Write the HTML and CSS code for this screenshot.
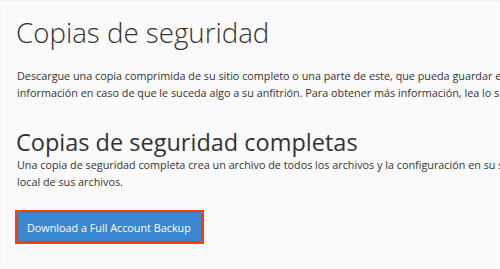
FILE: index.html
```html
<!DOCTYPE html>
<html lang="es">
<head>
<meta charset="utf-8">
<title>Copias de seguridad</title>
<link rel="stylesheet" href="styles.css">
</head>
<body>
<main class="page">
  <h1 class="title">Copias de seguridad</h1>
  <p class="desc">Descargue una copia comprimida de su sitio completo o una parte de este, que pueda guardar en su computadora. Cuando realiza copias de seguridad de su sitio web, tiene una copia adicional de su<br>información en caso de que le suceda algo a su anfitrión. Para obtener más información, lea lo siguiente documentation.</p>
  <h2 class="subtitle">Copias de seguridad completas</h2>
  <p class="desc">Una copia de seguridad completa crea un archivo de todos los archivos y la configuración en su sitio web. Puede utilizar este archivo para mover su cuenta a otro servidor o para mantener una copia<br>local de sus archivos.</p>
  <div class="actions">
    <span class="highlight"><button class="btn-primary" type="button">Download a Full Account Backup</button></span>
  </div>
</main>
</body>
</html>
```

FILE: styles.css
```css
html, body {
  margin: 0;
  padding: 0;
}
body {
  background: #fafafa;
  color: #333;
  font-family: "Open Sans", "DejaVu Sans", sans-serif;
  width: 500px;
  height: 269px;
  overflow: hidden;
  box-shadow: inset 0 1px 2px rgba(0,0,0,0.06);
}
.page {
  width: 1000px;
  padding: 16px 15px 0 15px;
}
.title {
  margin: 0;
  font-weight: 300;
  font-size: 27.7px;
  line-height: 33px;
  color: #333;
  padding-left: 1px;
}
.desc {
  margin: 18px 0 0 0;
  font-size: 10.8px;
  line-height: 17px;
  white-space: nowrap;
  padding-left: 2px;
}
.subtitle {
  margin: 28px 0 0 0;
  font-weight: 400;
  font-size: 23.5px;
  line-height: 26px;
  color: #333;
  padding-left: 1px;
}
.subtitle + .desc {
  margin-top: 1px;
}
.actions {
  margin-top: 20px;
  display: flex;
}
.highlight {
  display: inline-flex;
  border: 2px solid #ff3d00;
}
.btn-primary {
  font-family: "Open Sans", "DejaVu Sans", sans-serif;
  font-size: 10.8px;
  line-height: 17px;
  color: #fff;
  background: #3a88d1;
  border: 1px solid #2e77bd;
  padding: 6px 10px 5px 9px;
  margin: 0;
  border-radius: 1px;
}
```
